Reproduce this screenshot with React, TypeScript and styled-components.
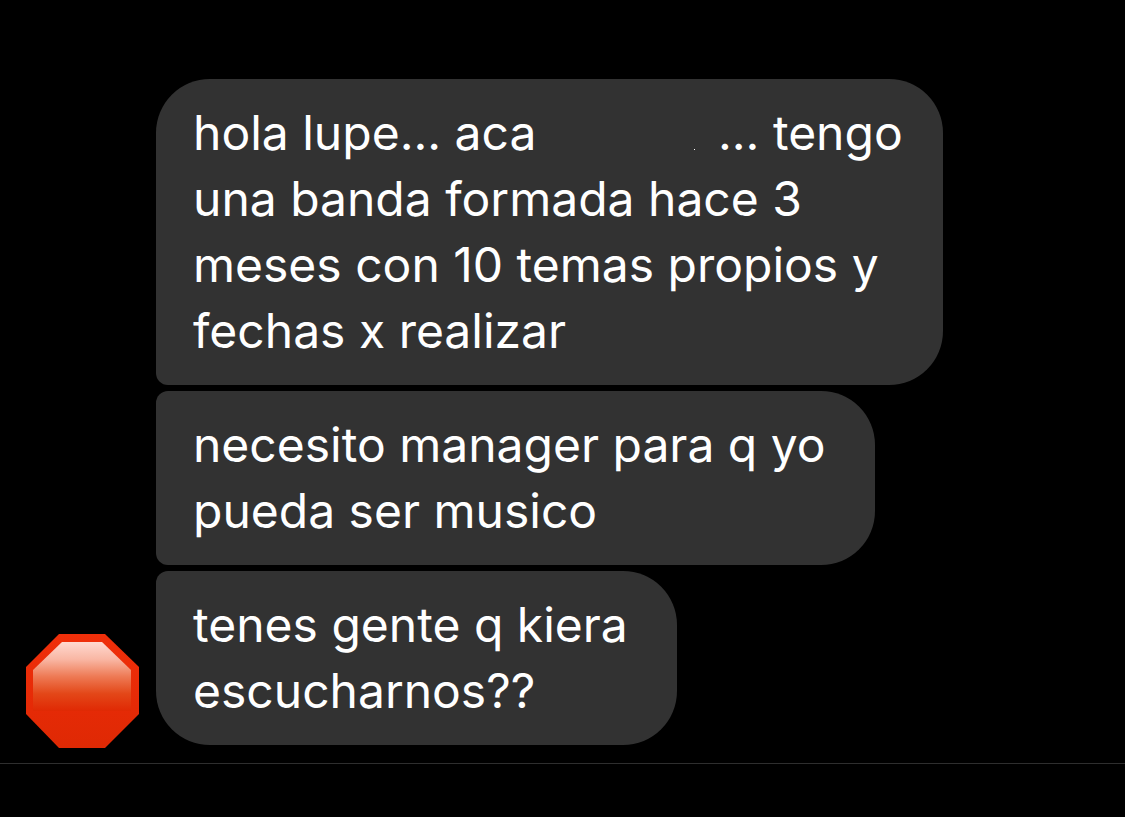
import React from "react";
import styled, { createGlobalStyle } from "styled-components";

const GlobalStyle = createGlobalStyle`
  * { box-sizing: border-box; }
  body { margin: 0; background: #000; }
`;

const Screen = styled.main`
  min-height: 100vh;
  background: #000;
  color: #fff;
  font-family: Inter, "Liberation Sans", sans-serif;
`;

const Thread = styled.section`
  display: flex;
  align-items: flex-end;
  gap: 16px;
  padding: 79px 24px 18px;
  border-bottom: 1px solid #2e2e2e;
`;

const Avatar = styled.svg`
  flex: none;
  width: 116px;
  height: 116px;
  margin-bottom: -4px;
`;

const Messages = styled.div`
  display: flex;
  flex-direction: column;
  align-items: flex-start;
  gap: 6px;
`;

const Bubble = styled.p<{ $last?: boolean; $first?: boolean }>`
  margin: 0;
  padding: 21px ${(p) => (p.$first ? "40px" : "49px")} 21px 37px;
  background: #323232;
  border-radius: ${(p) => (p.$first ? "54px" : "12px")} 54px 54px ${(p) => (p.$last ? "54px" : "12px")};
  font-size: 48px;
  line-height: 66px;
`;

/* Blanked-out name, with the speck left over at its end */
const Hidden = styled.span`
  display: inline-block;
  width: 168px;
  height: 1px;
  background: linear-gradient(#fff, #fff) 144px 0 / 1px 1px no-repeat;
`;

export default function App() {
  return (
    <>
      <GlobalStyle />
      <Screen>
        <Thread>
          <Avatar viewBox="0 0 116 116" role="img" aria-label="Avatar">
            <defs>
              <linearGradient id="rim" x1="0" y1="0" x2="0" y2="1">
                <stop offset="0" stopColor="#f02f0a" />
                <stop offset="0.65" stopColor="#e52a06" />
                <stop offset="1" stopColor="#df2904" />
              </linearGradient>
              <linearGradient id="face" gradientUnits="userSpaceOnUse" x1="0" y1="9" x2="0" y2="78">
                <stop offset="0" stopColor="#ffd9d0" />
                <stop offset="0.25" stopColor="#f9b7a4" />
                <stop offset="0.5" stopColor="#ee7a55" />
                <stop offset="0.75" stopColor="#e34718" />
                <stop offset="1" stopColor="#e02904" />
              </linearGradient>
            </defs>
            <path d="M35 1H81L115 34V81L81 115H35L2 81V34Z" fill="url(#rim)" />
            <path d="M38 9H78L107 37V78H9V37Z" fill="url(#face)" />
          </Avatar>
          <Messages>
            <Bubble $first>
              hola lupe... aca <Hidden />... tengo<br />
              una banda formada hace 3<br />
              meses con 10 temas propios y<br />
              fechas x realizar
            </Bubble>
            <Bubble>
              necesito manager para q yo<br />
              pueda ser musico
            </Bubble>
            <Bubble $last>
              tenes gente q kiera<br />
              escucharnos??
            </Bubble>
          </Messages>
        </Thread>
      </Screen>
    </>
  );
}
